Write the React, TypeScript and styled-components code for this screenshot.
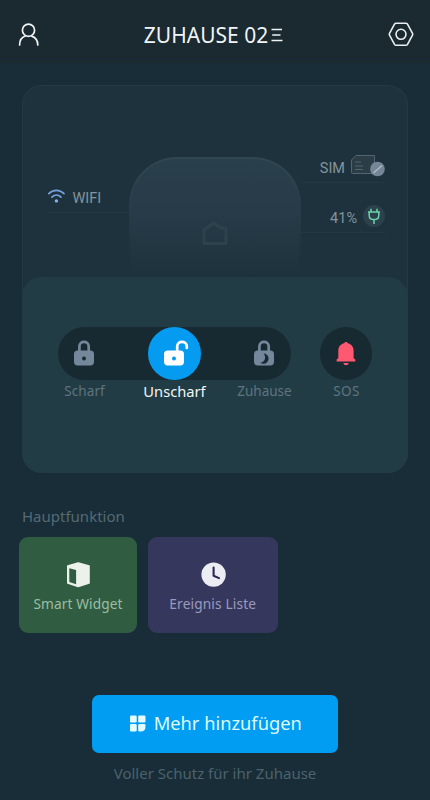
import React from "react";
import styled, { createGlobalStyle } from "styled-components";

const GlobalStyle = createGlobalStyle`
  * { box-sizing: border-box; }
  body { margin: 0; background: #182d37; }
`;

const Screen = styled.main`
  width: 430px;
  height: 800px;
  overflow: hidden;
  display: flex;
  flex-direction: column;
  background: #182d37;
  font-family: "Noto Sans", "Open Sans", sans-serif;
`;

const Header = styled.header`
  height: 63px;
  flex: none;
  display: flex;
  align-items: center;
  justify-content: space-between;
  padding: 7px 15px 0 18px;
  background: #1a2a30;
`;

const Title = styled.h1`
  margin: 0;
  display: flex;
  align-items: center;
  gap: 3px;
`;

const Label = styled.span<{ $size: number; $color: string; $track?: number }>`
  font-size: ${(p) => p.$size}px;
  line-height: 20px;
  font-weight: 400;
  letter-spacing: ${(p) => p.$track ?? 0}px;
  color: ${(p) => p.$color};
  white-space: nowrap;
`;

const HubCard = styled.section`
  width: 386.5px;
  height: 388.5px;
  flex: none;
  margin: 21.5px 0 0 21.5px;
  display: flex;
  flex-direction: column;
  border-radius: 20px;
  background: #1e323d;
  box-shadow: inset 0 0 0 1px #233943;
`;

const HubStatus = styled.div`
  height: 192.5px;
  flex: none;
  display: grid;
  grid-template-columns: 107.5px 172px 107px;
`;

const StatusColumn = styled.div<{ $side: "left" | "right" }>`
  display: flex;
  flex-direction: column;
  padding: ${(p) => (p.$side === "left" ? "98.5px 0 0 25px" : "68.5px 23px 0 0")};
`;

const StatusRow = styled.div<{ $height: number; $gap: number; $right?: boolean }>`
  height: ${(p) => p.$height}px;
  display: flex;
  align-items: flex-start;
  justify-content: ${(p) => (p.$right ? "flex-end" : "flex-start")};
  gap: ${(p) => p.$gap}px;
  border-bottom: 1px solid #223842;
`;

const StatusText = styled.span<{ $top: number }>`
  padding-top: ${(p) => p.$top}px;
  font: 400 14.5px/18px Roboto, sans-serif;
  color: #84949c;
`;

const IconSlot = styled.span<{ $top: number }>`
  display: flex;
  padding-top: ${(p) => p.$top}px;
`;

const Device = styled.div`
  height: 119.5px;
  margin-top: 72.5px;
  display: flex;
  justify-content: center;
  padding-top: 61px;
  border-radius: 48px 48px 0 0;
  background:
    linear-gradient(#293f4b, #273c48 45%, #1e323d 98%) padding-box,
    linear-gradient(#304751, #273c46 45%, #1e323d 85%) border-box;
  border: 2px solid transparent;
  border-bottom: 0;
`;

const ControlPanel = styled.div`
  flex: 1;
  display: flex;
  flex-direction: column;
  padding: 50px 0 0;
  border-radius: 20px;
  background: #223c46;
`;

const ModeRow = styled.div`
  display: flex;
  gap: 29px;
  padding-left: 36.5px;
`;

const ModeTrack = styled.div`
  width: 232.5px;
  height: 52.6px;
  display: flex;
  justify-content: space-between;
  border-radius: 27px;
  background: #182a31;
`;

const RoundButton = styled.button<{ $fill?: string }>`
  width: 52.6px;
  height: 52.6px;
  padding: 0;
  border: 0;
  border-radius: 50%;
  display: grid;
  place-items: center;
  background: ${(p) => p.$fill ?? "transparent"};
`;

const ModeLabels = styled.div`
  display: grid;
  grid-template-columns: 90px 90px 90px 74px;
  margin: 1.4px 0 0 18px;
  justify-items: center;
`;

const SectionTitle = styled.h2`
  height: 20px;
  margin: 33px 0 0 22px;
  line-height: 20px;
  display: flex;
`;

const Tiles = styled.div`
  display: flex;
  gap: 11px;
  margin: 11px 0 0 19px;
`;

const Tile = styled.button<{ $width: number; $fill: string }>`
  width: ${(p) => p.$width}px;
  height: 95.5px;
  padding: 24px 0 0;
  border: 0;
  border-radius: 9px;
  display: flex;
  flex-direction: column;
  align-items: center;
  gap: 5px;
  font-family: inherit;
  background: ${(p) => p.$fill};
`;

const AddButton = styled.button`
  width: 246.5px;
  height: 58px;
  flex: none;
  margin: 62.3px 0 0 91.5px;
  padding: 0 0 1px 1px;
  border: 0;
  border-radius: 7px;
  display: flex;
  align-items: center;
  justify-content: center;
  gap: 8px;
  font-family: inherit;
  background: #009df3;
`;

const Footer = styled.footer`
  display: flex;
  justify-content: center;
  margin-top: 10.4px;
`;

const UserIcon = () => (
  <svg width="22" height="24" viewBox="0 0 22 24" fill="none" stroke="#f1f5f6" strokeWidth="1.7" strokeLinecap="round">
    <circle cx="10.5" cy="7.2" r="6.1" />
    <path d="M1.6 22c0-4.500 2.400-8 6.200-9.200M13.800 13.100c3.500 1.400 6 4.600 6 8.900" />
  </svg>
);

const MenuIcon = () => (
  <svg width="12" height="14" viewBox="0 0 12 14" stroke="#eef2f3" strokeWidth="1.700">
    <path d="M.5 1.500H11M1.200 7h8.300M.5 12.500H11.500" />
  </svg>
);

const SettingsIcon = () => (
  <svg width="28" height="26" viewBox="0 0 28 26" fill="none" stroke="#e9eef0" strokeWidth="1.600" strokeLinejoin="round">
    <path d="M9 1.300h10c.7 0 1.100.3 1.500.9l5 9.200c.3.600.3 1.200 0 1.800l-5 9.200c-.4.600-.8.900-1.500.9H9c-.7 0-1.100-.3-1.500-.9l-5-9.200c-.3-.6-.3-1.200 0-1.800l5-9.200c.4-.6.800-.9 1.500-.9Z" />
    <circle cx="14" cy="12.300" r="5" />
  </svg>
);

const WifiIcon = () => (
  <svg width="19" height="15" viewBox="0 0 19 15" fill="none" stroke="#789fde" strokeWidth="1.700" strokeLinecap="round">
    <path d="M1.800 4.600c4.300-4.400 10.800-4.400 15.200 0M4.900 8.200c2.700-2.700 6.400-2.700 9.100 0" />
    <circle cx="9.400" cy="11.900" r="1.700" fill="#8bb1f1" stroke="none" />
  </svg>
);

const SimIcon = () => (
  <svg width="35" height="23" viewBox="0 0 35 23" fill="none">
    <path d="M6 1.500H24.500V19.500H2.500c-.7 0-1-.3-1-1V6Z" fill="#2b3e47" stroke="#526570" strokeWidth="1" />
    <path d="M5 8h6M5 12h8M5 15.500h8" stroke="#52646d" />
    <circle cx="27.500" cy="15" r="7.300" fill="#758797" />
    <path d="M23.500 19l8.500-7.500" stroke="#b2c0ca" strokeWidth="1.100" />
  </svg>
);

const PlugIcon = () => (
  <svg width="22" height="22" viewBox="0 0 22 22" fill="none" stroke="#6bd4aa" strokeWidth="1.500">
    <circle cx="11" cy="11" r="11" fill="#2c414b" stroke="none" />
    <path d="M8 3.800v3M14 3.800v3M5 7.100h12M6.200 7.100v3.400c0 2.700 2 4.100 4.800 4.100s4.800-1.400 4.800-4.100V7.100M11 14.600v4.500" />
  </svg>
);

const HomeIcon = () => (
  <svg width="30" height="27" viewBox="0 0 30 27" fill="none" stroke="#2e424d" strokeWidth="3" strokeLinejoin="round">
    <path d="M4 10 13.500 3l7.500 5H26v15.500H4Z" />
  </svg>
);

const LockIcon = ({ mode, color, hole }: { mode: "closed" | "open" | "night"; color: string; hole: string }) => (
  <svg width="30" height="30" viewBox="0 0 30 30" fill="none">
    <path
      d={mode === "open" ? "M18.200 13V8.600c0-6.200 9.600-6.200 9.600 0v1.400" : "M10.400 13V8.400c0-6.100 9.300-6.100 9.300 0V13"}
      stroke={color}
      strokeWidth="2.700"
      strokeLinecap="round"
    />
    <rect x="5" y="12.400" width="20" height="15" rx="3.700" fill={color} />
    {mode === "night" ? (
      <path d="M14.500 15.200c4.800.8 6.800 5.800 3.500 9.100-1.600 1.700-4.600 2.200-6.900.4 4.500-.3 6.800-5.300 3.400-9.500Z" fill={hole} />
    ) : (
      <circle cx="15" cy="20.400" r="2" fill={hole} />
    )}
  </svg>
);

const BellIcon = () => (
  <svg width="22" height="26" viewBox="0 0 22 26" fill="#ff5972">
    <path d="M9.300 3.300c.3-1.700 3.100-1.700 3.400 0C16.400 4 18.600 7 18.600 10.900v7.300l1.700 1.300v1.900H1.600v-1.900l1.700-1.300v-7.300C3.300 7 5.500 4 9.300 3.300ZM8.400 22.900h5.200c-.4 3-4.800 3-5.200 0Z" />
  </svg>
);

const BoxIcon = () => (
  <svg width="26" height="28" viewBox="0 0 26 28">
    <path d="M2.800 5 13.200 2 24 5v16.900l-10.800 3.600L2.800 22Z" fill="#ecf1ec" stroke="#ecf1ec" strokeWidth="1.600" strokeLinejoin="round" />
    <path d="M4.300 7.300 11.100 9v14.200l-6.800-2.300Z" fill="#305d41" />
  </svg>
);

const ClockIcon = () => (
  <svg width="26" height="28" viewBox="0 0 26 28" fill="none">
    <circle cx="13.600" cy="13.600" r="12.200" fill="#ececf3" />
    <path d="M13.600 6.500v8.200l5.400 2.400" stroke="#2a2954" strokeWidth="2.100" strokeLinecap="round" strokeLinejoin="round" />
  </svg>
);

const GridIcon = () => (
  <svg width="17" height="17" viewBox="0 0 17 17" fill="#e4fdff">
    <rect x="1" y="0.500" width="6.700" height="7" rx="1.200" />
    <rect x="9.200" y="0.500" width="7.300" height="7" rx="1.200" />
    <rect x="1" y="9" width="6.700" height="7.500" rx="1.200" />
    <path d="M10.400 9h4.900q1.200 0 1.200 1.200v1.600q0 4.700-4.700 4.700h-1.400q-1.200 0-1.200-1.200v-5.100Q9.200 9 10.400 9Z" />
  </svg>
);

export default function App() {
  return (
    <>
      <GlobalStyle />
      <Screen>
        <Header>
          <UserIcon />
          <Title>
            <Label $size={21} $color="#f1f4f5">ZUHAUSE 02</Label>
            <MenuIcon />
          </Title>
          <SettingsIcon />
        </Header>

        <HubCard>
          <HubStatus>
            <StatusColumn $side="left">
              <StatusRow $height={30} $gap={7}>
                <IconSlot $top={6}><WifiIcon /></IconSlot>
                <StatusText $top={7}>WIFI</StatusText>
              </StatusRow>
            </StatusColumn>
            <Device><HomeIcon /></Device>
            <StatusColumn $side="right">
              <StatusRow $height={30} $gap={5} $right>
                <StatusText $top={7}>SIM</StatusText>
                <IconSlot $top={1}><SimIcon /></IconSlot>
              </StatusRow>
              <StatusRow $height={50} $gap={6} $right>
                <StatusText $top={27}>41%</StatusText>
                <IconSlot $top={21.5}><PlugIcon /></IconSlot>
              </StatusRow>
            </StatusColumn>
          </HubStatus>

          <ControlPanel>
            <ModeRow>
              <ModeTrack>
                <RoundButton><LockIcon mode="closed" color="#75879b" hole="#182a31" /></RoundButton>
                <RoundButton $fill="#049bf0"><LockIcon mode="open" color="#ffffff" hole="#049bf0" /></RoundButton>
                <RoundButton><LockIcon mode="night" color="#75879b" hole="#182a31" /></RoundButton>
              </ModeTrack>
              <RoundButton $fill="#182a31"><BellIcon /></RoundButton>
            </ModeRow>
            <ModeLabels>
              <Label $size={13.5} $color="#5e747e" $track={0.1}>Scharf</Label>
              <Label $size={14.7} $color="#f2f7f8">Unscharf</Label>
              <Label $size={13.5} $color="#5e747e">Zuhause</Label>
              <Label $size={13.5} $color="#5e747e" $track={0.3}>SOS</Label>
            </ModeLabels>
          </ControlPanel>
        </HubCard>

        <SectionTitle>
          <Label $size={15} $color="#546a74">Hauptfunktion</Label>
        </SectionTitle>
        <Tiles>
          <Tile $width={118} $fill="#305d41">
            <BoxIcon />
            <Label $size={13.7} $color="#9bbea4" $track={0.1}>Smart Widget</Label>
          </Tile>
          <Tile $width={129.5} $fill="#36375d">
            <ClockIcon />
            <Label $size={13.7} $color="#9a9abd" $track={0.15}>Ereignis Liste</Label>
          </Tile>
        </Tiles>

        <AddButton>
          <GridIcon />
          <Label $size={18.3} $color="#dcfaff">Mehr hinzufügen</Label>
        </AddButton>
        <Footer>
          <Label $size={15} $color="#4c626c">Voller Schutz für ihr Zuhause</Label>
        </Footer>
      </Screen>
    </>
  );
}
